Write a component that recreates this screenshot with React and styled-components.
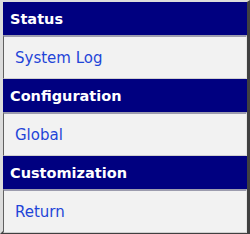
import React from 'react';
import styled, { createGlobalStyle } from 'styled-components';

const GlobalStyle = createGlobalStyle`
	html, body {
		margin: 0;
		padding: 0;
		background: #ffffff;
	}
`;

const sections = [
	{ title: 'Status', items: ['System Log'] },
	{ title: 'Configuration', items: ['Global'] },
	{ title: 'Customization', items: ['Return'] }
];

export default function App() {
	return (
		<>
			<GlobalStyle />
			<Menu>
				{sections.map((s) => (
					<Section key={s.title}>
						<Heading>{s.title}</Heading>
						{s.items.map((item) => (
							<Item key={item}>
								<Link href="#">{item}</Link>
							</Item>
						))}
					</Section>
				))}
			</Menu>
		</>
	);
}

const Menu = styled.div`
	box-sizing: border-box;
	width: 250px;
	height: 234px;
	display: flex;
	flex-direction: column;
	background: #f2f2f2;
	border-top: 2px solid #dcdcdc;
	border-left: 3px solid #dcdcdc;
	border-right: 3px solid #404040;
	border-bottom: 3px solid #404040;
	font-family: 'DejaVu Sans', Verdana, sans-serif;
`;
const Section = styled.div`
	display: flex;
	flex-direction: column;
	flex: 0 0 auto;
	&:last-child {
		flex: 1 0 auto;
	}
`;
const Heading = styled.div`
	box-sizing: border-box;
	height: 33px;
	flex-shrink: 0;
	display: flex;
	align-items: center;
	padding-left: 7px;
	background: #000080;
	color: #ffffff;
	font-size: 14.5px;
	font-weight: bold;
`;
const Item = styled.div`
	box-sizing: border-box;
	height: 44px;
	flex: 1 0 auto;
	display: flex;
	align-items: center;
	padding-left: 11px;
	background: #f2f2f2;
	border-top: 2px solid #9c9cae;
	border-left: 1px solid #606060;
	border-right: 1px solid #e4e4e4;
	border-bottom: 1px solid #d0d0d0;
`;
const Link = styled.a`
	color: #1f45d8;
	text-decoration: none;
	font-size: 15px;
`;
